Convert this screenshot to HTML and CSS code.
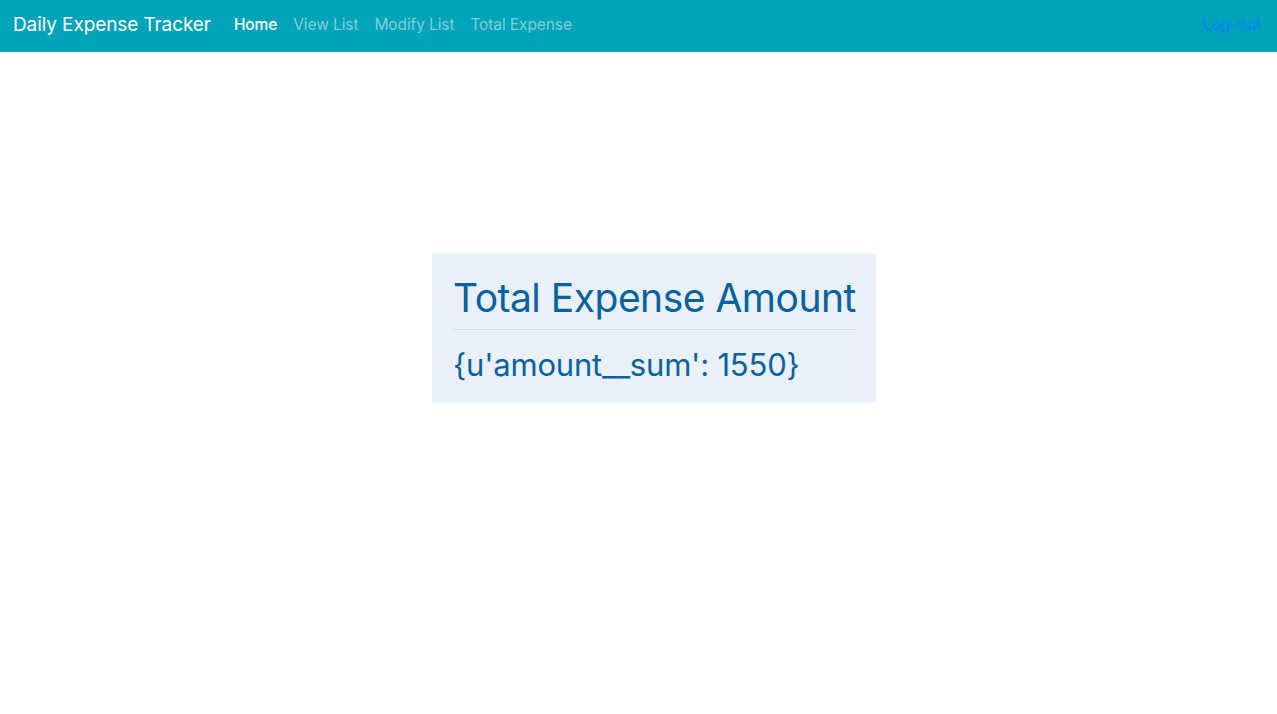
FILE: index.html
```html
<!DOCTYPE html>
<html>
<head>
<meta charset="utf-8">
<link rel="stylesheet" href="styles.css">
</head>
<body>
<nav class="navbar">
  <a class="brand" href="#">Daily Expense Tracker</a>
  <ul class="nav-links">
    <li><a class="nav-link active" href="#">Home</a></li>
    <li><a class="nav-link" href="#">View List</a></li>
    <li><a class="nav-link" href="#">Modify List</a></li>
    <li><a class="nav-link" href="#">Total Expense</a></li>
  </ul>
  <a class="logout" href="#">Log-out</a>
</nav>
<main class="main">
  <section class="total-box">
    <h1 class="total-title">Total Expense Amount</h1>
    <hr class="divider">
    <h2 class="total-value">{u'amount__sum': 1550}</h2>
  </section>
</main>
</body>
</html>
```
FILE: styles.css
```css
* { box-sizing: border-box; }
html, body { margin: 0; padding: 0; }
body {
  font-family: Inter, "Liberation Sans", sans-serif;
  background: #fff;
  color: #212529;
}
.navbar {
  height: 52px;
  background: #00a3b7;
  display: flex;
  align-items: center;
  padding: 0 16px 4px 13px;
}
.brand {
  color: #fff;
  text-decoration: none;
  font-size: 19px;
  margin-right: 15px;
  letter-spacing: -0.1px;
}
.nav-links {
  display: flex;
  list-style: none;
  margin: 0;
  padding: 0;
  flex: 1;
}
.nav-link {
  display: block;
  padding: 0 8px;
  font-size: 15.5px;
  color: rgba(255,255,255,0.5);
  text-decoration: none;
  letter-spacing: -0.1px;
}
.nav-link.active { color: #fff; font-weight: 500; }
.logout {
  color: #007bff;
  text-decoration: none;
  font-size: 15.5px;
}
.main {
  display: flex;
  padding: 201px 0 0 432px;
}
.total-box {
  width: 444px;
  background: #e9f0f7;
  padding: 21px 20px 16px 21px;
  color: #07629e;
}
.total-title {
  margin: 0;
  font-size: 39px;
  font-weight: 400;
  line-height: 48px;
  letter-spacing: -0.5px;
  white-space: nowrap;
}
.divider {
  border: 0;
  border-top: 1px solid #d3dbe3;
  margin: 7px 0 13px;
}
.total-value {
  margin: 0;
  font-size: 31px;
  font-weight: 400;
  line-height: 44px;
  letter-spacing: -0.2px;
  white-space: nowrap;
}
```
